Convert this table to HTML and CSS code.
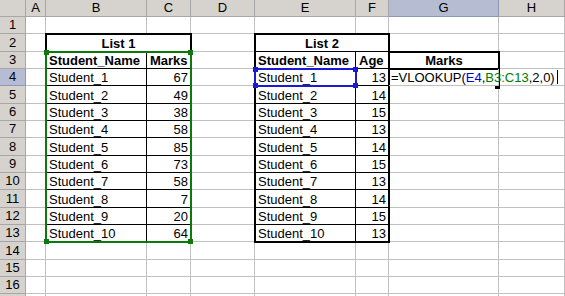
FILE: index.html
```html
<!DOCTYPE html>
<html>
<head>
<meta charset="utf-8">
<link rel="stylesheet" href="styles.css">
</head>
<body>
<div class="sheet">
  <div class="layer cells">
    <!-- header row -->
    <div class="h corner"></div>
    <div class="h">A</div><div class="h">B</div><div class="h">C</div><div class="h">D</div>
    <div class="h">E</div><div class="h">F</div><div class="h sel">G</div><div class="h">H</div>
    <!-- 1 -->
    <div class="h rh">1</div><div class="c"></div><div class="c"></div><div class="c"></div><div class="c"></div><div class="c"></div><div class="c"></div><div class="c"></div><div class="c"></div>
    <!-- 2 -->
    <div class="h rh">2</div><div class="c"></div>
    <div class="c t b ctr span2">List 1</div>
    <div class="c"></div>
    <div class="c t b ctr span2">List 2</div>
    <div class="c"></div><div class="c"></div>
    <!-- 3 -->
    <div class="h rh">3</div><div class="c"></div>
    <div class="c t b">Student_Name</div><div class="c t b">Marks</div>
    <div class="c"></div>
    <div class="c t b">Student_Name</div><div class="c t b">Age</div>
    <div class="c b ctr">Marks</div><div class="c"></div>
    <!-- 4 -->
    <div class="h rh sel">4</div><div class="c"></div>
    <div class="c t">Student_1</div><div class="c t r">67</div>
    <div class="c"></div>
    <div class="c t">Student_1</div><div class="c t r">13</div>
    <div class="c edit"><span class="formula">=VLOOKUP(<span class="ref-blue">E4</span>,<span class="ref-green">B3:C13</span>,2,0)<span class="caret"></span></span></div>
    <div class="c"></div>
    <!-- 5 -->
    <div class="h rh">5</div><div class="c"></div>
    <div class="c t">Student_2</div><div class="c t r">49</div><div class="c"></div>
    <div class="c t">Student_2</div><div class="c t r">14</div><div class="c"></div><div class="c"></div>
    <!-- 6 -->
    <div class="h rh">6</div><div class="c"></div>
    <div class="c t">Student_3</div><div class="c t r">38</div><div class="c"></div>
    <div class="c t">Student_3</div><div class="c t r">15</div><div class="c"></div><div class="c"></div>
    <!-- 7 -->
    <div class="h rh">7</div><div class="c"></div>
    <div class="c t">Student_4</div><div class="c t r">58</div><div class="c"></div>
    <div class="c t">Student_4</div><div class="c t r">13</div><div class="c"></div><div class="c"></div>
    <!-- 8 -->
    <div class="h rh">8</div><div class="c"></div>
    <div class="c t">Student_5</div><div class="c t r">85</div><div class="c"></div>
    <div class="c t">Student_5</div><div class="c t r">14</div><div class="c"></div><div class="c"></div>
    <!-- 9 -->
    <div class="h rh">9</div><div class="c"></div>
    <div class="c t">Student_6</div><div class="c t r">73</div><div class="c"></div>
    <div class="c t">Student_6</div><div class="c t r">15</div><div class="c"></div><div class="c"></div>
    <!-- 10 -->
    <div class="h rh">10</div><div class="c"></div>
    <div class="c t">Student_7</div><div class="c t r">58</div><div class="c"></div>
    <div class="c t">Student_7</div><div class="c t r">13</div><div class="c"></div><div class="c"></div>
    <!-- 11 -->
    <div class="h rh">11</div><div class="c"></div>
    <div class="c t">Student_8</div><div class="c t r">7</div><div class="c"></div>
    <div class="c t">Student_8</div><div class="c t r">14</div><div class="c"></div><div class="c"></div>
    <!-- 12 -->
    <div class="h rh">12</div><div class="c"></div>
    <div class="c t">Student_9</div><div class="c t r">20</div><div class="c"></div>
    <div class="c t">Student_9</div><div class="c t r">15</div><div class="c"></div><div class="c"></div>
    <!-- 13 -->
    <div class="h rh">13</div><div class="c"></div>
    <div class="c t">Student_10</div><div class="c t r">64</div><div class="c"></div>
    <div class="c t">Student_10</div><div class="c t r">13</div><div class="c"></div><div class="c"></div>
    <!-- 14 -->
    <div class="h rh">14</div><div class="c"></div><div class="c"></div><div class="c"></div><div class="c"></div><div class="c"></div><div class="c"></div><div class="c"></div><div class="c"></div>
    <!-- 15 -->
    <div class="h rh">15</div><div class="c"></div><div class="c"></div><div class="c"></div><div class="c"></div><div class="c"></div><div class="c"></div><div class="c"></div><div class="c"></div>
    <!-- 16 -->
    <div class="h rh">16</div><div class="c"></div><div class="c"></div><div class="c"></div><div class="c"></div><div class="c"></div><div class="c"></div><div class="c"></div><div class="c"></div>
    <!-- 17 (only its top edge is visible) -->
    <div class="h rh"></div><div class="c"></div><div class="c"></div><div class="c"></div><div class="c"></div><div class="c"></div><div class="c"></div><div class="c"></div><div class="c"></div>
  </div>

  <div class="layer marks">
    <div class="box list1"></div>
    <div class="box list2"></div>
    <div class="box marks-head"></div>
    <div class="box active"><i class="fill"></i></div>
    <div class="range green"><i class="hd tl"></i><i class="hd tr"></i><i class="hd bl"></i><i class="hd br"></i></div>
    <div class="range blue"><i class="hd tl"></i><i class="hd tr"></i><i class="hd bl"></i><i class="hd br"></i></div>
  </div>
</div>
</body>
</html>
```

FILE: styles.css
```css
html, body {
  margin: 0;
  padding: 0;
  background: #ffffff;
  overflow: hidden;
}

body {
  font-family: "Liberation Sans", Arial, sans-serif;
  font-size: 13px;
  color: #000;
}

.sheet {
  display: grid;
  width: 565px;
  height: 296px;
  overflow: hidden;
}

.layer {
  grid-area: 1 / 1;
  display: grid;
  grid-template-columns: 26px 20px 101px 44px 64px 101px 33px 110px 66px;
  grid-template-rows: 17px 17px 18px 17px 17px 18px 17px 17px 18px 17px 17px 18px 17px 17px 18px 17px 17px 17px;
}

/* ordinary cells */
.c {
  box-sizing: border-box;
  border-right: 1px solid #c0c0c0;
  border-bottom: 1px solid #c0c0c0;
  display: flex;
  align-items: flex-end;
  padding: 0 2px 0 3px;
  line-height: 15px;
  white-space: nowrap;
  min-width: 0;
}

.c.t { border-color: #000; }
.c.b { font-weight: bold; }
.c.ctr { justify-content: center; }
.c.r { justify-content: flex-end; }
.span2 { grid-column: span 2; }

.c.edit {
  overflow: visible;
  position: relative;
  z-index: 2;
  padding-left: 2px;
}

.formula {
  display: inline-flex;
  align-items: flex-end;
}

.ref-blue { color: #0000e0; }
.ref-green { color: #007a00; }

.caret {
  display: inline-block;
  width: 1px;
  height: 14px;
  background: #000;
  margin-left: 2px;
  margin-bottom: 1px;
}

/* headers */
.h {
  box-sizing: border-box;
  background: #d6d3ce;
  border-right: 1px solid #a7a6aa;
  border-bottom: 1px solid #a7a6aa;
  display: flex;
  align-items: center;
  justify-content: center;
  line-height: 16px;
  color: #000;
}

.h.sel {
  background: #b6bdd2;
  border-color: #8d97b6;
}

/* overlay marks */
.marks { pointer-events: none; }

.box, .range {
  box-sizing: border-box;
  margin: -1px -1px -1px -1px;
}

.box { border: 2px solid #000; }

.list1 { grid-row: 3 / 15; grid-column: 3 / 5; }
.list2 { grid-row: 3 / 15; grid-column: 6 / 8; }

.marks-head {
  grid-row: 4 / 5;
  grid-column: 8 / 9;
  border-left: none;
}

.active {
  grid-row: 5 / 6;
  grid-column: 8 / 9;
  border-left: none;
  border-top: none;
  border-bottom: none;
  position: relative;
}

.fill {
  position: absolute;
  right: -2px;
  bottom: -2px;
  width: 5px;
  height: 4px;
  background: #000;
}

.range {
  position: relative;
  border: 2px solid;
}

.green {
  grid-row: 4 / 15;
  grid-column: 3 / 5;
  border-color: #0a7a0a;
  color: #0a7a0a;
}

.blue {
  grid-row: 5 / 6;
  grid-column: 6 / 7;
  border-color: #1a1ad6;
  color: #1a1ad6;
}

.hd {
  position: absolute;
  width: 5px;
  height: 5px;
  background: currentColor;
}
.hd.tl { left: -3px; top: -3px; }
.hd.tr { right: -3px; top: -3px; }
.hd.bl { left: -3px; bottom: -3px; }
.hd.br { right: -3px; bottom: -3px; }
```
